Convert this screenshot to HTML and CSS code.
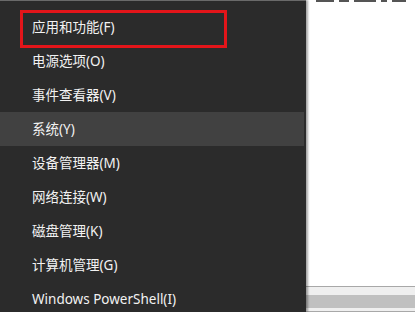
FILE: index.html
```html
<!DOCTYPE html>
<html lang="zh-CN">

<head>
  <meta charset="UTF-8" />
  <title>Win+X 菜单</title>
  <link rel="stylesheet" href="styles.css">
</head>

<body>
  <div class="screen">
    <div class="menu">
      <div class="item marked">应用和功能(F)</div>
      <div class="item">电源选项(O)</div>
      <div class="item">事件查看器(V)</div>
      <div class="item active">系统(Y)</div>
      <div class="item">设备管理器(M)</div>
      <div class="item">网络连接(W)</div>
      <div class="item">磁盘管理(K)</div>
      <div class="item">计算机管理(G)</div>
      <div class="item">Windows PowerShell(I)</div>
    </div>

    <div class="desk">
      <div class="top-text">
        <span class="frag w18"></span>
        <span class="frag w10"></span>
        <span class="frag w22"></span>
        <span class="frag w6"></span>
        <span class="frag w14"></span>
      </div>
      <div class="spacer"></div>
      <div class="bar-line"></div>
      <div class="bar-light"></div>
      <div class="bar-gray"></div>
      <div class="bar-light small"></div>
      <div class="bar-line"></div>
    </div>
  </div>
</body>

</html>
```

FILE: styles.css
```css
*,
*::after {
  box-sizing: border-box;
  margin: 0;
  padding: 0;
}

body {
  background: #fff;
  font-family: 'Segoe UI', 'Noto Sans', 'Noto Sans CJK SC', sans-serif;
  width: 415px;
  height: 312px;
  overflow: hidden;
}

.screen {
  display: flex;
  height: 312px;
}

.menu {
  width: 306px;
  flex-shrink: 0;
  background: #2b2b2b;
  border-top: 1px solid #6a6a6a;
  padding-top: 9px;
  padding-right: 2px;
  box-shadow: 2px 0 2px rgba(0, 0, 0, 0.35);
  position: relative;
  z-index: 1;
}

.item {
  height: 34px;
  line-height: 34px;
  padding-left: 32px;
  font-size: 13.5px;
  color: #f2f2f2;
  white-space: nowrap;
  position: relative;
}

.item.active {
  background: #414141;
}

.item.marked::after {
  content: '';
  position: absolute;
  left: 20px;
  top: 0;
  width: 207px;
  height: 38px;
  border: 3px solid #e3151a;
}

.desk {
  flex: 1;
  display: flex;
  flex-direction: column;
  background: #fff;
}

.top-text {
  display: flex;
  gap: 5px;
  height: 4px;
  padding-left: 10px;
}

.frag {
  height: 2px;
  background: #555;
}

.w6 { width: 6px; }
.w10 { width: 10px; }
.w14 { width: 14px; }
.w18 { width: 18px; }
.w22 { width: 22px; }

.spacer {
  flex: 1;
}

.bar-line {
  height: 1px;
  background: #a8a8a8;
}

.bar-light {
  height: 8px;
  background: #efefef;
}

.bar-light.small {
  height: 3px;
}

.bar-gray {
  height: 13px;
  background: #c0c0c0;
}
```
